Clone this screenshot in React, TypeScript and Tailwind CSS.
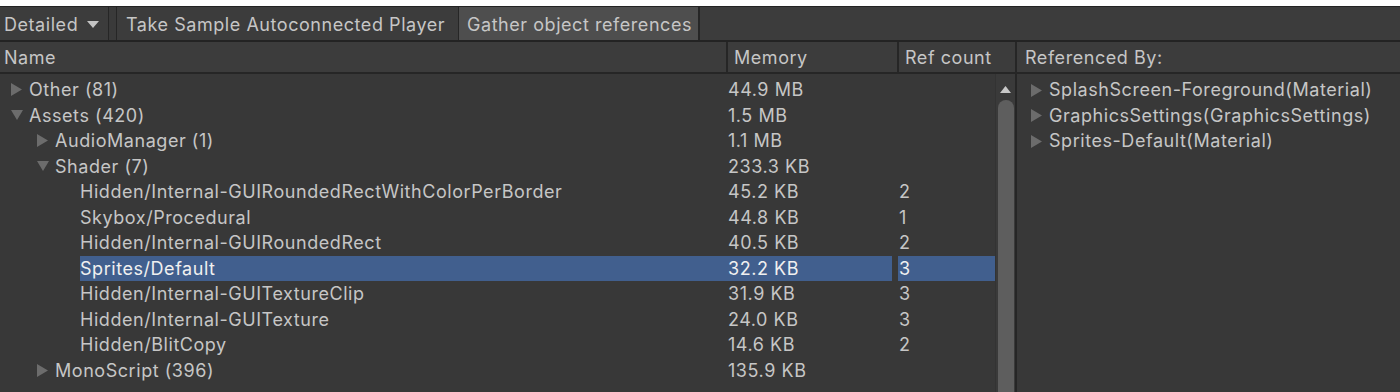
import React from "react";

type Row = { name: string; level: number; arrow?: "right" | "down"; mem: string; ref?: string; selected?: boolean };

const rows: Row[] = [
  { name: "Other (81)", level: 0, arrow: "right", mem: "44.9 MB" },
  { name: "Assets (420)", level: 0, arrow: "down", mem: "1.5 MB" },
  { name: "AudioManager (1)", level: 1, arrow: "right", mem: "1.1 MB" },
  { name: "Shader (7)", level: 1, arrow: "down", mem: "233.3 KB" },
  { name: "Hidden/Internal-GUIRoundedRectWithColorPerBorder", level: 2, mem: "45.2 KB", ref: "2" },
  { name: "Skybox/Procedural", level: 2, mem: "44.8 KB", ref: "1" },
  { name: "Hidden/Internal-GUIRoundedRect", level: 2, mem: "40.5 KB", ref: "2" },
  { name: "Sprites/Default", level: 2, mem: "32.2 KB", ref: "3", selected: true },
  { name: "Hidden/Internal-GUITextureClip", level: 2, mem: "31.9 KB", ref: "3" },
  { name: "Hidden/Internal-GUITexture", level: 2, mem: "24.0 KB", ref: "3" },
  { name: "Hidden/BlitCopy", level: 2, mem: "14.6 KB", ref: "2" },
  { name: "MonoScript (396)", level: 1, arrow: "right", mem: "135.9 KB" },
  { name: "", level: 1, mem: "" },
];

const Arrow = ({ dir }: { dir: "right" | "down" }) =>
  dir === "right" ? (
    <svg width="12" height="13" viewBox="0 0 12 13" className="block">
      <polygon points="0,0 11,6.5 0,13" fill="#6c6c6c" />
    </svg>
  ) : (
    <svg width="12" height="12" viewBox="0 0 12 12" className="block">
      <polygon points="0,1 12,1 6,11" fill="#6c6c6c" />
    </svg>
  );

export default function App() {
  const indents = [0, 26, 51];
  return (
    <div
      className="w-[1400px] h-[392px] overflow-hidden bg-white text-[18px] leading-[22px] tracking-[0.55px] text-[#c6c6c6]"
      style={{ fontFamily: "Inter, 'Noto Sans', sans-serif" }}
    >
      <div className="h-[6px] bg-white" />
      <div className="h-[36px] bg-[#3c3c3c] border-t border-b-2 border-[#232323] flex items-stretch">
        <div className="w-[109px] flex items-center pl-[4px] pt-[2px] gap-[9px] border-r border-[#262626]">
          <span>Detailed</span>
          <svg width="12" height="8" viewBox="0 0 12 8"><polygon points="0,0 12,0 6,7" fill="#c4c4c4" /></svg>
        </div>
        <div className="w-[8px] border-r border-[#262626] bg-[#3a3a3a]" />
        <div className="w-[342px] flex items-center pl-[9px] pt-[2px] border-r border-[#262626]">Take Sample Autoconnected Player</div>
        <div className="w-[241px] flex items-center pl-[8px] pt-[2px] bg-[#4e4e4e] border-r-2 border-[#262626]">Gather object references</div>
        <div className="flex-1" />
      </div>
      <div className="flex h-[350px] bg-[#383838]">
        <div className="w-[1015px] flex flex-col min-h-0">
          <div className="h-[32px] shrink-0 bg-[#3c3c3c] border-b-2 border-[#262626] flex">
            <div className="w-[728px] flex items-center pl-[4px] pt-[2px] border-r-2 border-[#262626]">Name</div>
            <div className="w-[171px] flex items-center pl-[6px] pt-[2px] border-r-2 border-[#262626]">Memory</div>
            <div className="flex-1 flex items-center pl-[6px] pt-[2px]">Ref count</div>
          </div>
          <div className="flex flex-1 min-h-0">
            <div className="w-[995px] pt-[3px] overflow-hidden">
              {rows.map((r, i) => (
                <div key={i} className="h-[25.5px] shrink-0 flex items-stretch">
                  <div className="w-[892px] flex">
                    <div className="shrink-0 flex items-center" style={{ width: indents[r.level] + 29 }}>
                      <div className="shrink-0" style={{ width: indents[r.level] + 11 }} />
                      {r.arrow && <Arrow dir={r.arrow} />}
                    </div>
                    <div className={`flex-1 flex items-center pt-[1px] ${r.selected ? "bg-[#415f8e] text-[#f0f0f0]" : ""}`}>
                      <span className="flex-1 whitespace-nowrap">{r.name}</span>
                      <span className="w-[164px]">{r.mem}</span>
                    </div>
                  </div>
                  <div className="w-[6px]" />
                  <div className={`w-[97px] flex items-center pl-[1px] pt-[1px] ${r.selected ? "bg-[#415f8e] text-[#f0f0f0]" : ""}`}>{r.ref}</div>
                </div>
              ))}
            </div>
            <div className="w-[20px] flex flex-col items-center border-l border-[#333333] bg-[#3a3a3a]">
              <div className="h-[26px] shrink-0 flex items-center justify-center pt-[5px]">
                <svg width="11" height="7" viewBox="0 0 11 7"><polygon points="0,7 11,7 5.5,0" fill="#c8c8c8" /></svg>
              </div>
              <div className="w-[16px] flex-1 bg-[#5e5e5e] rounded-t-[8px]" />
            </div>
          </div>
        </div>
        <div className="w-[2px] bg-[#262626]" />
        <div className="flex-1 flex flex-col">
          <div className="h-[32px] shrink-0 bg-[#3c3c3c] border-b-2 border-[#262626] flex items-center pl-[8px] pt-[2px]">Referenced By:</div>
          <div className="pt-[3px]">
            {["SplashScreen-Foreground(Material)", "GraphicsSettings(GraphicsSettings)", "Sprites-Default(Material)"].map((t) => (
              <div key={t} className="h-[25.5px] flex items-center pt-[1px]">
                <div className="w-[14px]" />
                <Arrow dir="right" />
                <span className="ml-[6px] whitespace-nowrap">{t}</span>
              </div>
            ))}
          </div>
        </div>
      </div>
    </div>
  );
}
